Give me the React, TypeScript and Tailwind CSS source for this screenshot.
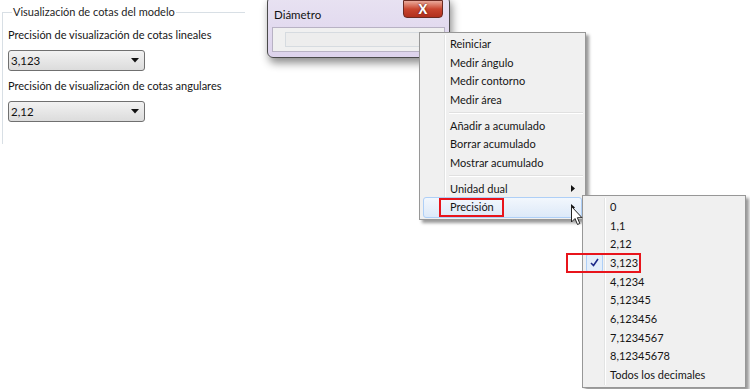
import React from 'react';

const font = { fontFamily: 'Lato, "Noto Sans", sans-serif' };

const Combo: React.FC<{ value: string }> = ({ value }) => (
  <div className="mt-[7px] w-[137px] h-[21px] flex items-center justify-between rounded-[3px] border border-[#707070] bg-gradient-to-b from-[#f2f2f2] to-[#dcdcdc] pl-[2px] pr-[5px] text-[11.5px] text-[#111]">
    <span>{value}</span>
    <svg width="8" height="5" viewBox="0 0 8 5"><path d="M0 0 H8 L4 4.5 Z" fill="#111" /></svg>
  </div>
);

const Arrow: React.FC = () => (
  <svg width="4" height="7" viewBox="0 0 4 7"><path d="M0 0 L4 3.5 L0 7 Z" fill="#111" /></svg>
);

const Item: React.FC<{ label: string; sub?: boolean; hot?: boolean; boxed?: boolean }> = ({ label, sub, hot, boxed }) => (
  <div className="relative h-[18.67px] flex items-center">
    {hot && (
      <div className="absolute left-[1px] right-[1px] -top-[1px] -bottom-[1px] rounded-[3px] border border-[#aecff7] bg-gradient-to-b from-[#f2f7fd] to-[#dde9f8]" />
    )}
    <span className="relative pl-[28px] flex-1">
      {boxed ? (
        <span className="relative inline-block">
          {label}
          <span className="absolute -left-[11px] -right-[10px] -top-[1px] -bottom-[1px] border-2 border-[#e8141b]" />
        </span>
      ) : label}
    </span>
    {sub && <span className="relative pr-[8px] flex"><Arrow /></span>}
  </div>
);

const Sep: React.FC = () => (
  <div className="h-[7px] flex items-center pl-[27px]">
    <div className="flex-1 h-[2px] border-t border-[#e0e0e0] border-b border-b-white" />
  </div>
);

export default function App() {
  const precisions = ['0', '1,1', '2,12', '3,123', '4,1234', '5,12345', '6,123456', '7,1234567', '8,12345678', 'Todos los decimales'];
  return (
    <div className="relative w-[750px] h-[389px] overflow-hidden bg-white text-[#151515]" style={font}>
      {/* left settings panel */}
      <fieldset className="ml-[2px] mt-[4px] w-[243px] h-[140px] border-t border-l border-[#d8dfe5] pl-[5px] pt-[7px]">
        <legend className="ml-[4px] px-[1px] text-[11px] leading-[16px] text-[#1e1e1e]">Visualización de cotas del modelo</legend>
        <div className="text-[11px] leading-[16px]">Precisión de visualización de cotas lineales</div>
        <Combo value="3,123" />
        <div className="mt-[7px] text-[11px] leading-[16px]">Precisión de visualización de cotas angulares</div>
        <Combo value="2,12" />
      </fieldset>

      {/* Diámetro window */}
      <div className="absolute left-[267px] -top-[4px] w-[183px] h-[62px] rounded-[6px] border border-[#4a4a4a] bg-gradient-to-b from-[#e8e2f2] to-[#ddd3ec] shadow-[2px_5px_8px_rgba(0,0,0,0.45)]">
        <div className="h-[30px] pl-[6px] pt-[10px] text-[11.5px] leading-[16px] text-[#111]">Diámetro</div>
        <div className="absolute right-[6px] top-[3px] w-[40px] h-[18px] rounded-b-[4px] border border-[#6b2a22] bg-gradient-to-b from-[#e9a99b] via-[#c9452f] to-[#b1301d] flex items-center justify-center">
          <span className="text-white font-black text-[13px] leading-none" style={{ textShadow: '0 0 2px #4a1208' }}>X</span>
        </div>
        <div className="mx-[4px] h-[25px] border border-[#b8b2c4] bg-[#f0f0f0] px-[12px] pt-[4px]">
          <div className="h-[15px] border border-[#d6dbe0] bg-[#ededed]" />
        </div>
      </div>

      {/* context menu */}
      <div className="absolute left-[419px] top-[32px] w-[167px] border border-[#979797] bg-[#f0f0f0] p-[2px] text-[11px] text-[#151515] shadow-[3px_3px_3px_rgba(0,0,0,0.4)]">
        <div className="absolute left-[24px] top-[2px] bottom-[2px] w-[2px] border-l border-[#e2e3e3] border-r border-r-white" />
        <Item label="Reiniciar" />
        <Item label="Medir ángulo" />
        <Item label="Medir contorno" />
        <Item label="Medir área" />
        <Sep />
        <Item label="Añadir a acumulado" />
        <Item label="Borrar acumulado" />
        <Item label="Mostrar acumulado" />
        <Sep />
        <Item label="Unidad dual" sub />
        <Item label="Precisión" sub hot boxed />
      </div>

      {/* submenu */}
      <div className="absolute left-[582px] top-[195px] w-[164px] border border-[#979797] bg-[#f0f0f0] p-[2px] text-[11px] text-[#151515] shadow-[3px_3px_3px_rgba(0,0,0,0.4)]">
        <div className="absolute left-[21px] top-[2px] bottom-[2px] w-[2px] border-l border-[#e2e3e3] border-r border-r-white" />
        {precisions.map((p) => (
          <div key={p} className="relative h-[18.67px] flex items-center pl-[25px]">
            {p === '3,123' && (
              <>
                <div className="absolute left-[1px] top-0 w-[17px] h-[18px] rounded-[2px] border border-[#aecff7] bg-[#e3eefb] flex items-center justify-center">
                  <svg width="9" height="9" viewBox="0 0 9 9"><path d="M1 5 L3.5 7.5 L8 1" stroke="#1d2a8a" strokeWidth="1.6" fill="none" /></svg>
                </div>
                <div className="absolute left-[-19px] w-[75px] -top-[1px] h-[20px] border-2 border-[#e8141b]" />
              </>
            )}
            <span className="relative">{p}</span>
          </div>
        ))}
      </div>

      {/* mouse cursor */}
      <svg className="absolute left-[571px] top-[206px]" width="12" height="20" viewBox="0 0 12 20">
        <path d="M0.5 0.5 L0.5 16 L4 12.5 L6.5 18.5 L8.8 17.5 L6.4 11.7 L11 11.7 Z" fill="white" stroke="#222" strokeWidth="1" />
      </svg>
    </div>
  );
}
